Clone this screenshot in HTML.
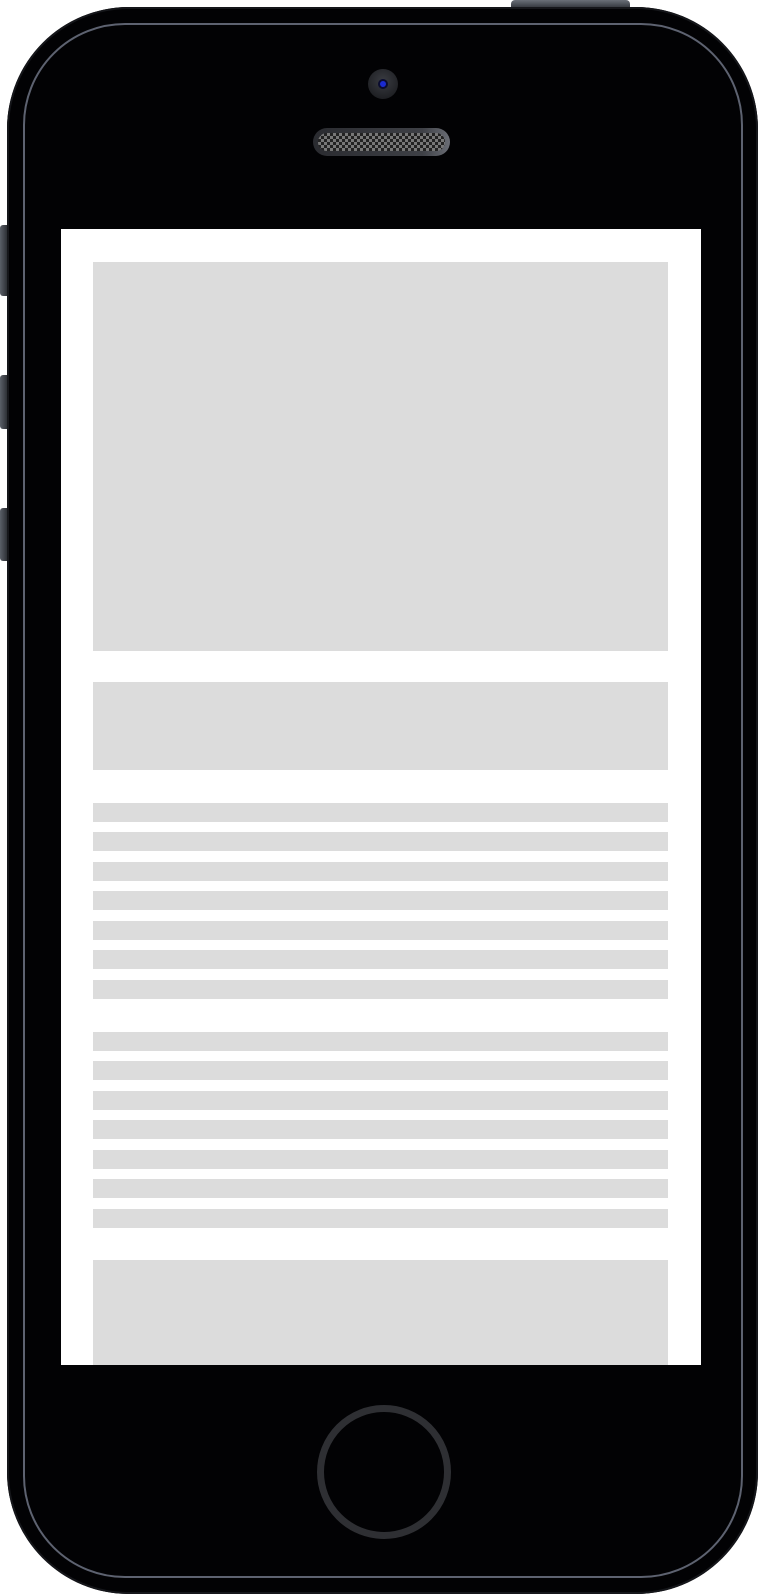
<!DOCTYPE html><html><head><style>
body{margin:0;width:758px;height:1594px;background:#fff;position:relative;overflow:hidden}
div{position:absolute;box-sizing:border-box}
.g{background:#dcdcdc;left:93px;width:575px}
.l{height:19px}
</style></head><body>
<div style="left:511px;top:0;width:119px;height:9px;border-radius:4px 4px 0 0;background:linear-gradient(#6a6f78,#2a2d33)"></div>
<div style="left:0;top:225px;width:10px;height:71px;border-radius:3px 0 0 3px;background:linear-gradient(90deg,#5a5f68,#1a1c20)"></div>
<div style="left:0;top:375px;width:10px;height:54px;border-radius:3px 0 0 3px;background:linear-gradient(90deg,#5a5f68,#1a1c20)"></div>
<div style="left:0;top:508px;width:10px;height:53px;border-radius:3px 0 0 3px;background:linear-gradient(90deg,#5a5f68,#1a1c20)"></div>
<div style="left:7px;top:7px;width:751px;height:1587px;border-radius:122px;background:#020204;box-shadow:inset 0 0 0 2px #15161a"></div>
<div style="left:23px;top:23px;width:720px;height:1555px;border-radius:102px;border:2px solid #5d6270"></div>
<div style="left:368px;top:69px;width:30px;height:30px;border-radius:50%;background:radial-gradient(circle at 50% 40%,#3a3c42,#151619)"></div>
<div style="left:378px;top:79px;width:10px;height:10px;border-radius:50%;background:#1a2ad0;border:2px solid #0a0c30"></div>
<div style="left:313px;top:128px;width:137px;height:28px;border-radius:14px;background:linear-gradient(90deg,#2a2b30,#3e4046 80%,#6a6d75);padding:5px"></div>
<div style="left:318px;top:133px;width:127px;height:18px;border-radius:9px;background-color:#222;background-image:linear-gradient(45deg,#777 25%,transparent 25%,transparent 75%,#777 75%),linear-gradient(45deg,#777 25%,transparent 25%,transparent 75%,#777 75%);background-size:6px 6px;background-position:0 0,3px 3px"></div>
<div style="left:61px;top:229px;width:640px;height:1136px;background:#fff;overflow:hidden">
</div>
<div class="g" style="top:262px;height:389px"></div>
<div class="g" style="top:682px;height:88px"></div>
<div class="g l" style="top:803px"></div>
<div class="g l" style="top:832px"></div>
<div class="g l" style="top:862px"></div>
<div class="g l" style="top:891px"></div>
<div class="g l" style="top:921px"></div>
<div class="g l" style="top:950px"></div>
<div class="g l" style="top:980px"></div>
<div class="g l" style="top:1032px"></div>
<div class="g l" style="top:1061px"></div>
<div class="g l" style="top:1091px"></div>
<div class="g l" style="top:1120px"></div>
<div class="g l" style="top:1150px"></div>
<div class="g l" style="top:1179px"></div>
<div class="g l" style="top:1209px"></div>
<div class="g" style="top:1260px;height:105px"></div>
<div style="left:317px;top:1405px;width:134px;height:134px;border-radius:50%;border:7px solid #2e2f33"></div>
</body></html>
